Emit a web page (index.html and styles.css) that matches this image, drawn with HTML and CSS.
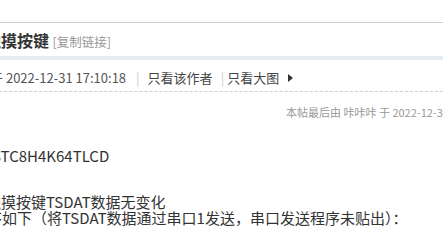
FILE: index.html
```html
<!DOCTYPE html>
<html lang="zh-CN">
<head>
<meta charset="utf-8">
<title>触摸按键</title>
<link rel="stylesheet" href="styles.css">
</head>
<body>
<div class="page">
  <div class="topbar"></div>
  <div class="title-row">
    <span class="title">触摸按键</span>
    <span class="copy">[复制链接]</span>
  </div>
  <div class="band"></div>
  <div class="authi">
    <span class="date">发表于 2022-12-31 17:10:18</span><span class="pipe">|</span><span class="link">只看该作者</span><span class="pipe pipe2">|</span><span class="link">只看大图</span><span class="arrow"></span>
  </div>
  <div class="pstatus">本帖最后由 咔咔咔 于 2022-12-31 17:12:05 编辑</div>
  <div class="post">
    <div class="line l-model">STC8H4K64TLCD</div>
    <div class="line l-b">触摸按键TSDAT数据无变化</div>
    <div class="line l-c">程序如下（将TSDAT数据通过串口1发送，串口发送程序未贴出）：</div>
  </div>
</div>
</body>
</html>
```
FILE: styles.css
```css
html, body {
  margin: 0;
  padding: 0;
  background: #fff;
}
body {
  width: 443px;
  height: 228px;
  overflow: hidden;
  font-family: "Noto Sans CJK SC", "Noto Sans", sans-serif;
  color: #333;
  white-space: nowrap;
}
.page {
  width: 443px;
}
.topbar {
  height: 22px;
  border-bottom: 1px solid #cdcdcd;
}
.title-row {
  height: 31px;
  padding-top: 2px;
  line-height: 31px;
  margin-left: -15px;
}
.title {
  font-size: 16px;
  font-weight: 700;
  color: #333;
}
.copy {
  font-size: 12.5px;
  color: #999;
}
.band {
  height: 4px;
  background: #e5edf2;
}
.authi {
  height: 27px;
  padding-top: 4px;
  line-height: 30px;
  border-bottom: 1px dashed #cdcdcd;
  margin-left: -36px;
  font-size: 13px;
  color: #555;
  display: flex;
  align-items: center;
}
.pipe {
  color: #ccc;
  margin: 0 8px 0 10px;
}
.pipe2 {
  margin: 0 3px 0 8px;
}
.link {
  color: #444;
}
.arrow {
  width: 0;
  height: 0;
  margin-left: 9px;
  border-top: 4px solid transparent;
  border-bottom: 4px solid transparent;
  border-left: 5px solid #333;
}
.pstatus {
  padding-top: 7px;
  height: 27px;
  line-height: 26px;
  font-size: 11px;
  color: #999;
  margin-left: 286px;
}
.post {
  margin-top: 22px;
  font-size: 15px;
  color: #333;
}
.line {
  line-height: 16px;
}
.l-model {
  margin-left: -8px;
}
.l-b {
  margin-top: 30px;
  margin-left: -14px;
}
.l-c {
  margin-left: -28px;
}
```
